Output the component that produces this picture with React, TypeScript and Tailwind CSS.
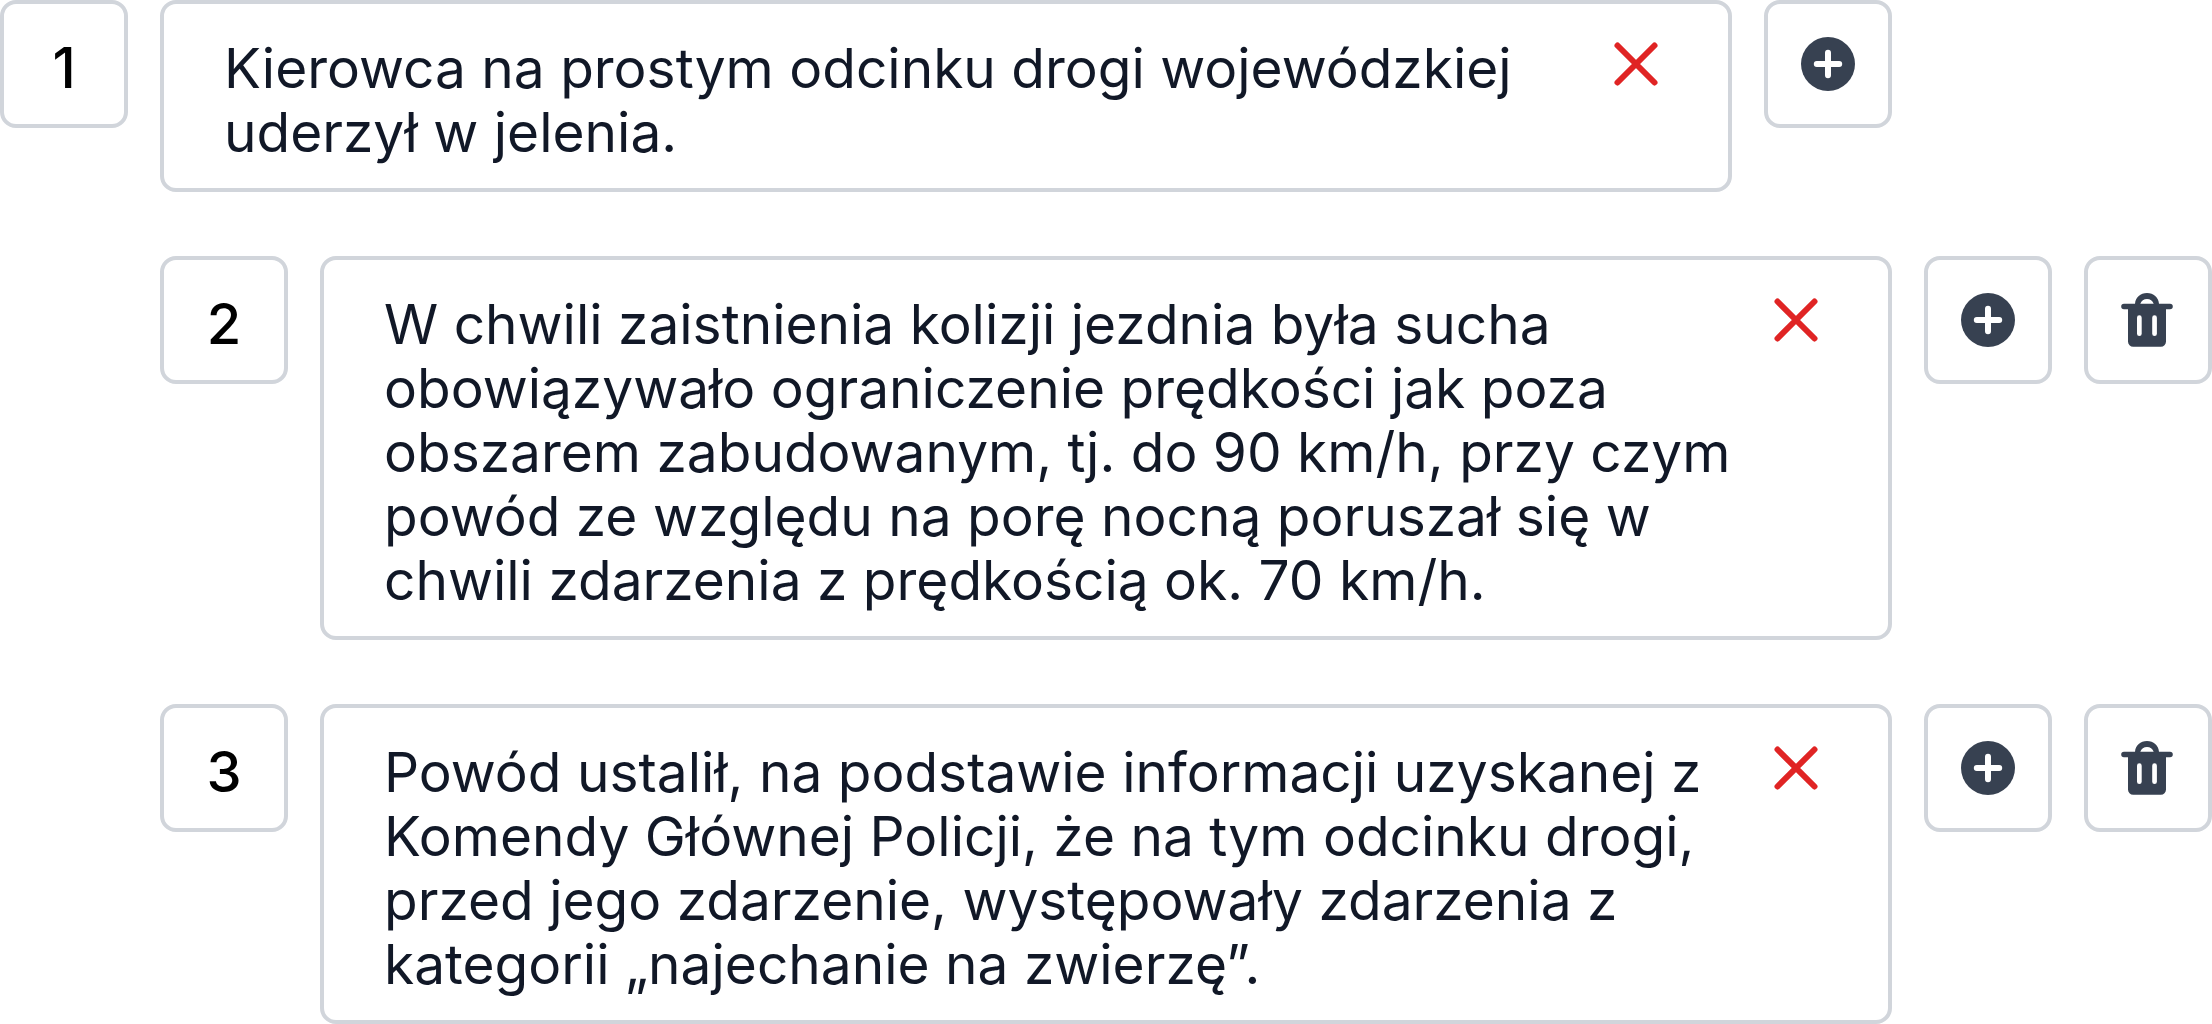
import type { ReactNode } from "react";

type Statement = { id: number; text: string; nested: boolean };

const statements: Statement[] = [
  {
    id: 1,
    text: "Kierowca na prostym odcinku drogi wojewódzkiej\nuderzył w jelenia.",
    nested: false,
  },
  {
    id: 2,
    text: "W chwili zaistnienia kolizji jezdnia była sucha\nobowiązywało ograniczenie prędkości jak poza\nobszarem zabudowanym, tj. do 90 km/h, przy czym\npowód ze względu na porę nocną poruszał się w\nchwili zdarzenia z prędkością ok. 70 km/h.",
    nested: true,
  },
  {
    id: 3,
    text: "Powód ustalił, na podstawie informacji uzyskanej z\nKomendy Głównej Policji, że na tym odcinku drogi,\nprzed jego zdarzenie, występowały zdarzenia z\nkategorii „najechanie na zwierzę”.",
    nested: true,
  },
];

function CrossIcon() {
  return (
    <svg viewBox="0 0 64 64" className="size-16" fill="none" stroke="currentColor" strokeWidth="6" strokeLinecap="round" aria-hidden="true">
      <path d="M13.5 13.5l37 37M50.5 13.5l-37 37" />
    </svg>
  );
}

function PlusCircleIcon() {
  return (
    <svg viewBox="0 0 64 64" className="size-16" aria-hidden="true">
      <circle cx="32" cy="32" r="27" fill="currentColor" />
      <path d="M20.8 32h22.4M32 20.8v22.4" stroke="white" strokeWidth="6" strokeLinecap="round" />
    </svg>
  );
}

function TrashIcon() {
  return (
    <svg viewBox="0 0 64 64" className="size-16" fill="currentColor" aria-hidden="true">
      <path
        fillRule="evenodd"
        d="M19 15.7C19.6 9.2 24.4 5 31 5s11.4 4.2 12 10.700H54a2.800 2.800 0 0 1 0 5.600H50V53.500a5.200 5.200 0 0 1-5.200 5.200H17.200a5.200 5.200 0 0 1-5.200-5.200V21.300H8a2.800 2.800 0 0 1 0-5.600ZM24.300 15.700H37.700C36.600 12.600 34.200 11 31 11s-5.600 1.600-6.700 4.700ZM21 29.700V45.700a2.350 2.350 0 0 0 4.700 0V29.700a2.350 2.350 0 0 0-4.700 0ZM36.200 29.700V45.700a2.350 2.350 0 0 0 4.700 0V29.700a2.350 2.350 0 0 0-4.700 0Z"
      />
    </svg>
  );
}

function ActionButton({ label, children }: { label: string; children: ReactNode }) {
  return (
    <button
      type="button"
      aria-label={label}
      className="flex size-32 shrink-0 items-center justify-center rounded-2xl border-4 border-[#d1d5db] text-[#374151]"
    >
      {children}
    </button>
  );
}

function StatementRow({ item }: { item: Statement }) {
  return (
    <li className={item.nested ? "flex items-start gap-8 pl-40" : "flex items-start gap-8 pr-80"}>
      <div className="flex size-32 shrink-0 items-center justify-center rounded-2xl border-4 border-[#d1d5db] pt-2 text-[56px] leading-16 font-medium text-black">
        {item.id}
      </div>
      <div className="flex min-w-0 flex-1 items-start rounded-2xl border-4 border-[#d1d5db] pr-15 pl-15">
        <p className="min-w-0 flex-1 pt-8 pb-6 text-[55px] leading-16 whitespace-pre-line text-[#111827]">{item.text}</p>
        <button type="button" aria-label="Usuń treść" className="mt-7 shrink-0 text-[#e02424]">
          <CrossIcon />
        </button>
      </div>
      <ActionButton label="Dodaj">
        <PlusCircleIcon />
      </ActionButton>
      {item.nested && (
        <ActionButton label="Usuń">
          <TrashIcon />
        </ActionButton>
      )}
    </li>
  );
}

export default function App() {
  return (
    <main className="bg-white font-['Inter',sans-serif]">
      <ul className="flex flex-col gap-16">
        {statements.map((item) => (
          <StatementRow key={item.id} item={item} />
        ))}
      </ul>
    </main>
  );
}
